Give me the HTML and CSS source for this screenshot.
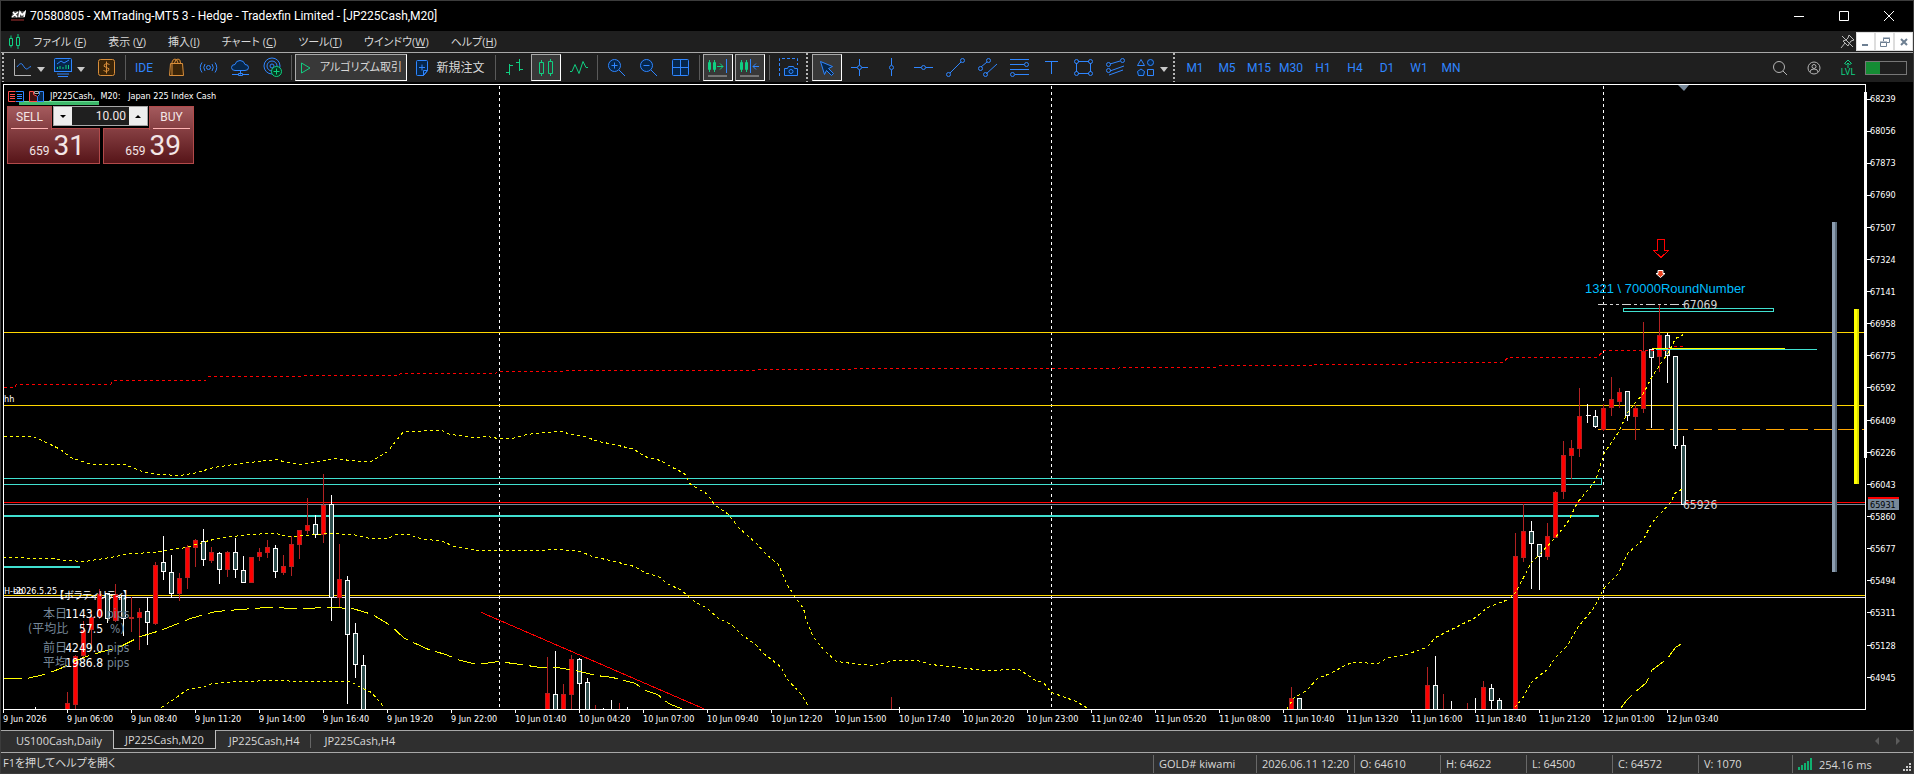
FILE: index.html
```html
<!DOCTYPE html>
<html lang="ja">
<head>
<meta charset="utf-8">
<title>70580805 - XMTrading-MT5 3 - Hedge - Tradexfin Limited - [JP225Cash,M20]</title>
<link rel="stylesheet" href="styles.css">
</head>
<body>
<header class="titlebar">
  <svg class="logo" width="16" height="12" viewBox="0 0 16 12"><path d="M3 1h12l-1 7H1z" fill="#444"/><path d="M3 2l4 5M8 2L2 7M9 7l1-5 2 3 3-3-1 5" stroke="#fff" stroke-width="1.6" fill="none"/><path d="M1 10h13" stroke="#a33"/></svg>
  <h1 class="title">70580805 - XMTrading-MT5 3 - Hedge - Tradexfin Limited - [JP225Cash,M20]</h1>
  <div class="window-buttons">
    <button aria-label="Minimize"><svg width="12" height="12" viewBox="0 0 12 12"><path d="M1 6.500h10"/></svg></button>
    <button aria-label="Maximize"><svg width="12" height="12" viewBox="0 0 12 12"><path d="M1.500 1.500h9v9h-9z"/></svg></button>
    <button aria-label="Close"><svg width="12" height="12" viewBox="0 0 12 12"><path d="M1 1l10 10M11 1L1 11"/></svg></button>
  </div>
</header>

<nav class="menubar">
  <svg class="menu-logo" width="13" height="15" viewBox="0 0 13 15"><path d="M1.500 4.500h3v7h-3zM3 1.500v3M3 11.500v2M8.500 3.500h3v8h-3zM10 0v3.500M10 11.500V15" fill="none" stroke="#10d082"/></svg>
  <a href="#">ファイル (<u>F</u>)</a><a href="#">表示 (<u>V</u>)</a><a href="#">挿入(<u>I</u>)</a><a href="#">チャート (<u>C</u>)</a><a href="#">ツール(<u>T</u>)</a><a href="#">ウインドウ(<u>W</u>)</a><a href="#">ヘルプ(<u>H</u>)</a>
  <div class="mdi">
    <svg width="15" height="15" viewBox="0 0 15 15"><path d="M2 2l11 11M9 1l5 5-3 1-2 3-1 2-5-5 3-1 2-2zM5 9l-4 5" fill="none" stroke="#bbb"/></svg>
    <button aria-label="Minimize chart"><svg width="12" height="12" viewBox="0 0 12 12"><path d="M2 9h6" stroke-width="2"/></svg></button>
    <button aria-label="Restore chart"><svg width="12" height="12" viewBox="0 0 12 12"><path d="M4.500 5V2.500h6v4H8M4 2h7M1.500 6.500h6v4h-6zM1 6h7"/></svg></button>
    <button aria-label="Close chart"><svg width="12" height="12" viewBox="0 0 12 12"><path d="M3 3l6 6M9 3L3 9" stroke-width="2"/></svg></button>
  </div>
</nav>

<div class="toolbar" role="toolbar" aria-label="Tools">
  <span class="grip"></span>
  <button class="tool drop" aria-label="Line chart"><svg class="icon" viewBox="0 0 20 21"><path class="gray" d="M1.500 2v16.500H18"/><path d="M4 10c2-3 4-4 5-3s3 5 4.500 5S16 10 18 9.500"/></svg><i class="caret"></i></button>
  <button class="tool drop" aria-label="Indicators"><svg class="icon" viewBox="0 0 20 21"><path class="soft" d="M2.500 1.500h15q1 0 1 1v12h-17v-12q0-1 1-1z"/><path d="M1 14.500h18M4 17h12M5 19.500h10M4 7l4-3 3 2 5-3"/><path class="green" d="M4.500 12v-2M7 12V9M10 12v-2M13 12V8M15.500 12V8"/></svg><i class="caret"></i></button>
  <button class="tool" aria-label="Market"><svg class="icon" viewBox="0 0 20 21"><rect class="amber" x="2.500" y="2.500" width="16" height="16" rx="2"/><path class="amber" d="M13.500 7.500q-3-2-5 0t2 3 2 3-5 0M10.500 4.500v12"/></svg></button>
  <i class="sep"></i>
  <button class="tool">IDE</button>
  <button class="tool" aria-label="Shop"><svg class="icon" viewBox="0 0 20 21"><path class="amber" d="M4.500 6.500h12l1 12h-14zM6 18V5q1-3 3-3t3 4M8.500 6q1-4 3.500-4t2.500 4"/></svg></button>
  <button class="tool" aria-label="Signals"><svg class="icon" viewBox="0 0 20 21"><circle cx="10.500" cy="10.500" r="2"/><path d="M7 7q-2.500 3.500 0 7M14 7q2.500 3.500 0 7M4 5.500q-3.500 5 0 10M17 5.500q3.500 5 0 10"/></svg></button>
  <button class="tool" aria-label="VPS"><svg class="icon" viewBox="0 0 20 21"><path class="soft" d="M5 13.500q-3.500 0-3.500-3t3.500-3q1-4 5-4t5 4q3.500 0 3.500 3t-3.500 3z"/><path d="M10.500 13.500v4M2 17.500h6M13 17.500h6M8.500 16.500h4v2h-4z"/></svg></button>
  <button class="tool" aria-label="Network"><svg class="icon" viewBox="0 0 20 21"><circle cx="10" cy="9" r="8"/><circle cx="10" cy="9" r="5"/><circle cx="10" cy="9" r="2"/><circle class="greenfill" cx="14.500" cy="14.500" r="5"/><path class="green" d="M11.500 14.500h6M14.500 11.500v6"/></svg></button>
  <i class="sep"></i>
  <button class="tool wide pressed"><svg class="play" width="12" height="14" viewBox="0 0 12 14"><path class="green" d="M1.500 2v10L10 7z"/></svg>アルゴリズム取引</button>
  <button class="tool order"><svg width="14" height="18" viewBox="0 0 14 18"><path class="soft" d="M2.500 1.500h9q1 0 1 1v9l-4 5h-6q-1 0-1-1v-13q0-1 1-1z"/><path d="M4 8.500h6M7 5.500v6M12.500 11.500l-4 5v-5z"/></svg>新規注文</button>
  <i class="sep"></i>
  <button class="tool" aria-label="Bar chart"><svg class="icon" viewBox="0 0 20 21"><path class="green" d="M5.500 7v11M2 15.500h3.500M5.500 8.500H9M15.500 2v12M12 5.500h3.500M15.500 12.500H19"/></svg></button>
  <button class="tool pressed" aria-label="Candlesticks"><svg class="icon" viewBox="0 0 20 21"><path class="green" d="M3.500 5.500h4v11h-4zM5.500 3v2.500M5.500 16.500V19M12.500 4.500h4v12h-4zM14.500 2v2.500M14.500 16.500V19"/></svg></button>
  <button class="tool" aria-label="Line"><svg class="icon" viewBox="0 0 20 21"><path class="green" d="M2 14.500h2l3-7 4 9 4-12 3 6h2"/></svg></button>
  <i class="sep"></i>
  <button class="tool" aria-label="Zoom in"><svg class="icon" viewBox="0 0 20 21"><circle class="soft" cx="8.500" cy="8.500" r="6"/><path d="M13 13l6 6M5.500 8.500h6M8.500 5.500v6"/></svg></button>
  <button class="tool" aria-label="Zoom out"><svg class="icon" viewBox="0 0 20 21"><circle class="soft" cx="8.500" cy="8.500" r="6"/><path d="M13 13l6 6M5.500 8.500h6"/></svg></button>
  <button class="tool" aria-label="Tile windows"><svg class="icon" viewBox="0 0 20 21"><rect class="soft" x="2.500" y="2.500" width="16" height="16" rx="1"/><path d="M10.500 2.500v16M2.500 10.500h16"/></svg></button>
  <i class="sep"></i>
  <button class="tool pressed" aria-label="Auto scroll"><svg class="icon" viewBox="0 0 20 21"><path class="green" d="M.5 5.500h2v7h-2zM1.500 3v12M5.500 5.500h2v7h-2zM6.500 3v12M9 9.500h6M12 6.500l3 3-3 3"/><path d="M18.500 2v14"/><path class="gray" d="M0 19h19"/></svg></button>
  <button class="tool pressed" aria-label="Chart shift"><svg class="icon" viewBox="0 0 20 21"><path class="green" d="M.5 5.500h2v7h-2zM1.500 3v12M5.500 5.500h2v7h-2zM6.500 3v12"/><path d="M10.500 2v14M19 9.500h-6M16 6.500l-3 3 3 3"/><path class="gray" d="M0 19h19"/></svg></button>
  <i class="sep"></i>
  <button class="tool" aria-label="Screenshot"><svg class="icon" viewBox="0 0 20 21"><path stroke-dasharray="3 2" d="M1.500 19V1.500h18V8"/><path class="soft" d="M6.500 11.500h3l1-2h5l1 2h3v7h-13z"/><circle cx="13" cy="14.500" r="2"/></svg></button>
  <span class="grip"></span>
  <button class="tool pressed" aria-label="Cursor"><svg class="icon" viewBox="0 0 20 21"><path class="soft" d="M3.500 4.500l12 5-4 2 5 5-2 2-5-5-2 4z"/></svg></button>
  <button class="tool" aria-label="Crosshair"><svg class="icon" viewBox="0 0 20 21"><path d="M2 10.500h6M13 10.500h6M10.500 2v6M10.500 13v6"/><circle cx="10.500" cy="10.500" r="2"/></svg></button>
  <button class="tool" aria-label="Vertical line"><svg class="icon" viewBox="0 0 20 21"><path d="M10.500 1v7M10.500 13v6"/><circle cx="10.500" cy="10.500" r="2"/></svg></button>
  <button class="tool" aria-label="Horizontal line"><svg class="icon" viewBox="0 0 20 21"><path d="M1 10.500h7M13 10.500h7"/><circle cx="10.500" cy="10.500" r="2"/></svg></button>
  <button class="tool" aria-label="Trendline"><svg class="icon" viewBox="0 0 20 21"><path d="M5 16L16 5"/><circle cx="3.500" cy="17.500" r="2"/><circle cx="17.500" cy="3.500" r="2"/></svg></button>
  <button class="tool" aria-label="Channel"><svg class="icon" viewBox="0 0 20 21"><path d="M4 10l6-5M9 17L20 7"/><circle cx="3.500" cy="11.500" r="2"/><circle cx="11.500" cy="3.500" r="2"/><circle cx="8.500" cy="17.500" r="2"/></svg></button>
  <button class="tool" aria-label="Fibonacci"><svg class="icon" viewBox="0 0 20 21"><path d="M1 2.500h19M1 7.500h14M1 12.500h19M6 17.500h14"/><circle cx="17.500" cy="7.500" r="2"/><circle cx="3.500" cy="17.500" r="2"/></svg></button>
  <button class="tool" aria-label="Text"><svg class="icon" viewBox="0 0 20 21"><path d="M4 4.500h13M10.500 4.500V17"/></svg></button>
  <button class="tool" aria-label="Rectangle"><svg class="icon" viewBox="0 0 20 21"><path d="M5 4.500h11M5 16.500h11M3.500 6v9M17.500 6v9"/><circle cx="3.500" cy="4.500" r="2"/><circle cx="17.500" cy="4.500" r="2"/><circle cx="3.500" cy="16.500" r="2"/><circle cx="17.500" cy="16.500" r="2"/></svg></button>
  <button class="tool" aria-label="Pitchfork"><svg class="icon" viewBox="0 0 20 21"><path d="M5 7l10-3M5 14l14-5M4 18l14-5"/><circle cx="3.500" cy="7.500" r="2"/><circle cx="17.500" cy="3.500" r="2"/><circle cx="3.500" cy="13.500" r="2"/></svg></button>
  <button class="tool drop shapes" aria-label="Shapes"><svg class="icon" viewBox="0 0 20 21"><path d="M5 2.500l3.500 6h-7zM11.500 12.500h6v6h-6z"/><circle class="soft" cx="14.500" cy="5.500" r="3"/><path class="soft" d="M5 12l3.500 2.500-1 4h-5l-1-4z"/></svg><i class="caret"></i></button>
  <span class="grip short"></span>
  <button class="tool">M1</button><button class="tool">M5</button><button class="tool">M15</button><button class="tool">M30</button><button class="tool">H1</button><button class="tool">H4</button><button class="tool">D1</button><button class="tool">W1</button><button class="tool">MN</button>
  <div class="status-tools">
    <button aria-label="Search"><svg width="16" height="16" viewBox="0 0 16 16"><circle class="gray" cx="7" cy="7" r="5.500"/><path class="gray" d="M11 11l4 4"/></svg></button>
    <button aria-label="Account"><svg width="16" height="16" viewBox="0 0 16 16"><circle class="gray" cx="8" cy="8" r="6"/><circle class="gray" cx="8" cy="6.500" r="2"/><path class="gray" d="M4 12q0-3 4-3t4 3"/></svg></button>
    <button class="lvl"><svg width="12" height="9" viewBox="0 0 12 9"><path class="green" d="M6 1L2.500 4.500 4.500 5.500 6 4 7.500 5.500l2-1zM6 4v5"/></svg>LVL</button>
    <span class="meter"><i></i></span>
  </div>
</div>

<main class="workspace">
  <svg class="chart" viewBox="0 82 1914 648" role="img" aria-label="JP225Cash M20">
    <g class="plot" transform="translate(.5 .5)">
      <path class="day" d="M499 85V709M1051 85V709M1603 85V709"/>
      <path class="gold" d="M3 332H1864M3 405H1864M3 595H1864"/>
      <path class="lavender" d="M3 597H1864"/>
      <path class="slate" d="M3 504H1864"/>
      <path class="turq" d="M3 478H1601V484H3M1623 308H1773V311H1623z"/>
      <path class="turq bold" d="M3 515H1598M3 566H79"/>
      <path class="redline" d="M3 502H1864M481 612L705 709"/>
      <path class="pivot" d="M1597 429H1864"/>
      <path class="level" d="M1597 304H1683"/>

      <path class="wick-up" d="M67 691V709M75 654V709M83 620V657M91 610V647M99 588V618M115 583V621M131 596V631M139 607V649M155 561V624M179 572V600M187 544V588M195 538V566M211 546V562M227 550V576M251 556V582M259 547V560M267 539V557M283 554V574M291 535V575M299 529V558M307 497V533M323 473V542M339 543V606M547 656V709M563 683V709M571 654V709M595 704V709M619 702V709M891 696V709M1291 686V709M1427 666V709M1443 693V709M1467 702V709M1483 680V709M1515 532V709M1523 503V561M1547 522V559M1555 490V537M1563 440V498M1571 439V478M1579 387V456M1603 403V430M1611 376V415M1619 387V407M1635 404V439M1643 321V412M1659 304V371"/>
      <path class="wick-down" d="M35 706V709M107 592V622M123 594V635M147 596V644M163 535V579M171 554V597M203 528V565M219 551V583M235 537V577M243 555V582M275 544V577M315 514V537M331 494V620M347 575V703M355 622V677M363 654V709M555 650V709M579 657V709M587 677V709M603 707V709M611 699V709M627 706V709M899 706V709M1435 655V709M1451 700V709M1475 697V709M1491 683V709M1499 697V709M1531 520V588M1539 543V589M1587 403V422M1585 415h5M1595 409V427M1627 390V420M1651 349V427M1667 332V382M1675 356V448M1683 435V504"/>
      <path class="body-up" d="M65 703h4v6h-4zM73 656h4v48h-4zM81 630h4v25h-4zM89 617h4v12h-4zM97 594h4v22h-4zM113 594h4v26h-4zM129 617h4v1h-4zM137 612h4v5h-4zM153 565h4v58h-4zM177 578h4v15h-4zM185 547h4v30h-4zM193 540h4v7h-4zM209 552h4v8h-4zM225 552h4v17h-4zM249 557h4v25h-4zM257 552h4v4h-4zM265 547h4v5h-4zM281 566h4v6h-4zM289 544h4v22h-4zM297 530h4v14h-4zM305 525h4v5h-4zM321 505h4v29h-4zM337 579h4v18h-4zM545 693h4v16h-4zM561 694h4v15h-4zM569 659h4v35h-4zM1289 698h4v11h-4zM1425 685h4v24h-4zM1481 687h4v22h-4zM1513 556h4v153h-4zM1521 531h4v26h-4zM1545 536h4v20h-4zM1553 492h4v45h-4zM1561 455h4v36h-4zM1569 448h4v7h-4zM1577 416h4v32h-4zM1601 408h4v21h-4zM1609 399h4v8h-4zM1617 392h4v9h-4zM1633 408h4v8h-4zM1641 351h4v57h-4zM1657 335h4v21h-4z"/>
      <path class="body-down" d="M105 593h4v25h-4zM121 595h4v23h-4zM145 611h4v11h-4zM161 562h4v9h-4zM169 572h4v21h-4zM201 541h4v18h-4zM217 553h4v16h-4zM233 552h4v17h-4zM241 570h4v12h-4zM273 548h4v23h-4zM313 524h4v10h-4zM329 504h4v93h-4zM345 580h4v54h-4zM353 633h4v31h-4zM361 665h4v44h-4zM553 694h4v15h-4zM577 659h4v24h-4zM585 682h4v27h-4zM1297 698h4v11h-4zM1433 685h4v24h-4zM1489 688h4v12h-4zM1497 700h4v9h-4zM1529 531h4v12h-4zM1537 544h4v12h-4zM1593 416h4v10h-4zM1625 391h4v24h-4zM1649 349h4v8h-4zM1665 335h4v20h-4zM1673 356h4v89h-4zM1681 445h4v59h-4z"/>

      <path class="turq" d="M1655 349H1816"/>
      <path class="yellow" d="M1651 348H1784"/>
      <path class="dots red" d="M3 387H14L16 384H110L113 380H205L208 376H300L302 375H396L401 373H495L497 371H565L566 370H756L758 369H850L855 368H1118L1119 367H1215L1218 365H1310L1312 364H1405L1410 362H1502L1508 357H1597L1603 350H1665L1672 346H1682"/>
      <path class="dots" d="M3 436H32L46 442 60 449 70 457 91 464H124L132 467 144 472 158 474 180 475 197 472 213 467 240 463 276 459 286 462 299 464 326 460 334 458 358 461H371L387 451 403 431 441 430 450 434 474 437 486 436 498 438H512L526 434 544 432 560 431 572 434 584 436 598 441 614 444 634 449 644 456 660 460 670 466 684 473 690 484 706 493 714 504 728 514 738 527 756 543 766 554 778 564 786 583 795 597 803 608 806 620 813 637 824 650 836 661 852 663 874 665 893 660H917L930 664 960 667 982 670 1019 669 1035 680 1043 682 1051 692 1076 701 1089 709M1286 709L1293 698 1306 690 1317 678 1330 673 1346 664 1354 662 1378 663 1388 657 1403 655 1426 647 1435 637 1453 628 1475 617 1487 607 1508 599 1515 592 1531 562 1539 554 1555 537 1567 522 1577 502 1587 490 1595 480 1604 452 1618 432 1627 412 1635 402 1643 393 1651 377 1659 365 1668 352 1675 338 1683 334"/>
      <path class="dots" d="M3 557L50 558 66 560 84 561 110 557 130 553 155 552 165 550 186 547 205 541 217 538 240 535 266 533H275L288 536 306 535 330 533 352 534 370 538H388L395 534H408L420 538 442 541 454 546 478 550H540L556 549 580 551 592 556 614 561 634 566 644 572 658 576 668 584 680 589 694 601 707 608 718 618 731 624 741 634 755 644 763 653 771 659 781 667 786 678 800 693 808 706M1514 707L1522 698 1531 682 1539 675 1547 669 1555 657 1567 645 1577 627 1593 608 1604 587 1618 573 1627 553 1643 539 1651 523 1659 514 1670 502 1675 492 1683 488"/>
      <path class="dots" d="M161 707L173 699 187 689 201 687 212 683 240 681 276 680 300 681H350L360 687 371 692 383 706"/>
      <path class="dashes" d="M3 678H26L44 674 60 668 75 660 92 654 120 646 140 636 160 630 190 618 215 611 240 609 266 607 300 608 330 607 352 608 372 614 390 625 404 638 428 649 445 654 460 660 477 664 498 661 520 664 540 667 556 667 575 670 596 675 612 677 635 683 645 690 657 694 668 703 683 709M1620 708L1626 700 1633 693 1646 682 1651 670 1667 658 1675 647 1683 642"/>

      <path class="frame" d="M3 709V84H1865V709H3M35 706V709M3 709v3M67 709v3M131 709v3M195 709v3M259 709v3M323 709v3M387 709v3M451 709v3M515 709v3M579 709v3M643 709v3M707 709v3M771 709v3M835 709v3M899 709v3M963 709v3M1027 709v3M1091 709v3M1155 709v3M1219 709v3M1283 709v3M1347 709v3M1411 709v3M1475 709v3M1539 709v3M1603 709v3M1667 709v3M1866 99h4M1866 131h4M1866 163h4M1866 195h4M1866 227h4M1866 259h4M1866 291h4M1866 323h4M1866 355h4M1866 387h4M1866 420h4M1866 452h4M1866 484h4M1866 516h4M1866 548h4M1866 580h4M1866 612h4M1866 645h4M1866 677h4"/>
      <path class="frame heavy" d="M1865 91V457"/>
    </g>
    <path fill="#778899" d="M1678 85h11l-5 6z"/>
    <path fill="#8c9db0" d="M1832 222h3v350h-3z"/><path fill="#5d6d7d" d="M1835 222h2v350h-2z"/>
    <path fill="#ff0" d="M1854 309h3v175h-3z"/><path fill="#dede00" d="M1857 309h2v175h-2z"/>
    <path class="sell-arrow" d="M1657.500 239.500h7v11h4l-7.500 7-7.500-7h4z"/>
    <path fill="#e8401c" stroke="#fff" d="M1658 270.500h5v3h2l-4.500 4-4.500-4h2z"/>
    <path fill="#f00" d="M1868 497h31v2h-31z"/><path fill="#778899" d="M1868 499h31v11h-31z"/>

    <g class="axis">
      <text x="1870" y="102">68239</text><text x="1870" y="134">68056</text><text x="1870" y="166">67873</text><text x="1870" y="198">67690</text><text x="1870" y="231">67507</text><text x="1870" y="263">67324</text><text x="1870" y="295">67141</text><text x="1870" y="327">66958</text><text x="1870" y="359">66775</text><text x="1870" y="391">66592</text><text x="1870" y="424">66409</text><text x="1870" y="456">66226</text><text x="1870" y="488">66043</text><text x="1870" y="520">65860</text><text x="1870" y="552">65677</text><text x="1870" y="584">65494</text><text x="1870" y="616">65311</text><text x="1870" y="649">65128</text><text x="1870" y="681">64945</text>
      <text class="last" x="1870" y="508">65931</text>
      <text x="3" y="722">9 Jun 2026</text><text x="67" y="722">9 Jun 06:00</text><text x="131" y="722">9 Jun 08:40</text><text x="195" y="722">9 Jun 11:20</text><text x="259" y="722">9 Jun 14:00</text><text x="323" y="722">9 Jun 16:40</text><text x="387" y="722">9 Jun 19:20</text><text x="451" y="722">9 Jun 22:00</text><text x="515" y="722">10 Jun 01:40</text><text x="579" y="722">10 Jun 04:20</text><text x="643" y="722">10 Jun 07:00</text><text x="707" y="722">10 Jun 09:40</text><text x="771" y="722">10 Jun 12:20</text><text x="835" y="722">10 Jun 15:00</text><text x="899" y="722">10 Jun 17:40</text><text x="963" y="722">10 Jun 20:20</text><text x="1027" y="722">10 Jun 23:00</text><text x="1091" y="722">11 Jun 02:40</text><text x="1155" y="722">11 Jun 05:20</text><text x="1219" y="722">11 Jun 08:00</text><text x="1283" y="722">11 Jun 10:40</text><text x="1347" y="722">11 Jun 13:20</text><text x="1411" y="722">11 Jun 16:00</text><text x="1475" y="722">11 Jun 18:40</text><text x="1539" y="722">11 Jun 21:20</text><text x="1603" y="722">12 Jun 01:00</text><text x="1667" y="722">12 Jun 03:40</text>
      <text x="4" y="402">hh</text><text x="4" y="594">H-bb</text><text x="13" y="594">-2026.5.25</text>
    </g>
    <text class="round" x="1585" y="293">1321 \ 70000RoundNumber</text>
    <g class="swing"><text x="1683" y="309">67069</text><text x="1683" y="509">65926</text></g>
    <g class="vola">
      <text class="head" x="59" y="599">【ボラティリティ】</text>
      <text x="43" y="618">本日</text><text class="num" x="103" y="618">1143.0</text><text x="107" y="618">pips</text>
      <text x="28" y="633">(平均比</text><text class="num" x="103" y="633">57.5</text><text x="110" y="633">%)</text>
      <text x="43" y="652">前日</text><text class="num" x="103" y="652">4249.0</text><text x="107" y="652">pips</text>
      <text x="43" y="667">平均</text><text class="num" x="103" y="667">1986.8</text><text x="107" y="667">pips</text>
    </g>
  </svg>

  <div class="overlay">
    <div class="symbol">
      <svg width="36" height="13" viewBox="0 0 36 13" fill="none"><path stroke="#ff4d4d" d="M7.500 1.500h-7v10h7M2 4.500h5M2 6.500h5M2 8.500h5"/><path stroke="#2f86ff" d="M8 1.500h7.500v10H8M9 4.500h5M9 6.500h5M9 8.500h5"/><path stroke="#ff4d4d" fill="#401010" d="M21.500 1.500h4v3l4 2v5h-8z"/><path stroke="#2f86ff" fill="#06264a" d="M35.500 1.500h-4v3l-2 2v5h6z"/><path stroke="#aaa" d="M26.500 1.500h4v2h-4z"/></svg>
      <span>JP225Cash,&nbsp; M20:&nbsp;&nbsp; Japan 225 Index Cash</span>
    </div>
    <div class="progress"></div>
    <div class="trade">
      <button class="side sell">SELL</button>
      <div class="volume"><button aria-label="Decrease volume"><i class="down"></i></button><input type="text" value="10.00" aria-label="Volume"><button aria-label="Increase volume"><i class="up"></i></button></div>
      <button class="side buy">BUY</button>
      <button class="price"><small>659</small>31</button>
      <button class="price right"><small>659</small>39</button>
    </div>
  </div>
</main>

<nav class="tabs">
  <a href="#">US100Cash,Daily</a><a href="#" class="active">JP225Cash,M20</a><a href="#">JP225Cash,H4</a><i></i><a href="#">JP225Cash,H4</a>
  <div class="scrollers"><button aria-label="Scroll left"><i class="left"></i></button><button aria-label="Scroll right"><i class="rightward"></i></button></div>
</nav>

<footer class="statusbar">
  <span class="help">F1を押してヘルプを開く</span>
  <span class="cell symbol-cell">GOLD# kiwami</span><span class="cell date-cell">2026.06.11 12:20</span><span class="cell">O: 64610</span><span class="cell">H: 64622</span><span class="cell">L: 64500</span><span class="cell">C: 64572</span><span class="cell volume-cell">V: 1070</span>
  <span class="cell ping"><svg width="15" height="12" viewBox="0 0 15 12"><path d="M1 12V9M4 12V7M7 12V5M10 12V3M13 12V0" stroke="#10b070" stroke-width="2"/></svg>254.16 ms
    <svg class="resize" width="9" height="9" viewBox="0 0 9 9"><path fill="#ccc" d="M6 0h2v2H6zM3 3h2v2H3zM6 3h2v2H6zM0 6h2v2H0zM3 6h2v2H3zM6 6h2v2H6z"/></svg></span>
</footer>
</body>
</html>
```
FILE: styles.css
```css
* { box-sizing: border-box; }

body {
  margin: 0;
  min-height: 100vh;
  display: flex;
  flex-direction: column;
  background: #2f2f2f;
  color: #d8d8d8;
  font: 12px/16px Roboto, "Noto Sans CJK JP", sans-serif;
  font-feature-settings: "palt";
}

body::after {
  content: "";
  position: fixed;
  inset: 0;
  border: 1px solid #3c3c3c;
  pointer-events: none;
}

button, input { font: inherit; color: inherit; font-feature-settings: inherit; }
button { border: 0; padding: 0; background: none; }
a { color: inherit; text-decoration: none; }

.menubar, .tabs, .statusbar { font-family: "Open Sans", "Noto Sans CJK JP", sans-serif; font-size: 11px; }

/* title */
.titlebar { display: flex; align-items: center; height: 31px; background: #000; color: #fff; }
.logo { margin-left: 10px; }
.title { flex: 1; margin: 0 0 0 4px; font-size: 12px; font-weight: 400; white-space: nowrap; }
.window-buttons { display: flex; padding-right: 3px; }
.window-buttons button { width: 45px; height: 30px; }
.window-buttons svg { fill: none; stroke: #fff; vertical-align: middle; }

/* menu */
.menubar { display: flex; align-items: center; gap: 22px; height: 22px; background: #1f1f1f; border-bottom: 1px solid #a8a8a8; }
.menu-logo { margin: 0 -10px 0 8px; }
.mdi { display: flex; align-items: center; margin-left: auto; padding-right: 1px; }
.mdi > svg { margin-right: 1px; }
.mdi button { width: 19px; height: 19px; background: #fff; border: 1px solid #ddd; }
.mdi button svg { display: block; margin: auto; fill: none; stroke: #6d7f92; }

/* toolbar */
.toolbar { display: flex; height: 29px; background: #1f1f1f; color: #2f86ff; }
.toolbar svg { fill: none; stroke: #2f86ff; }
.toolbar .gray { stroke: #b4b4b4; }
.toolbar .green { stroke: #10d082; }
.toolbar .greenfill { stroke: #10d082; fill: #06361f; }
.toolbar .amber { stroke: #d98e3a; fill: #3a2408; }
.toolbar .soft { fill: #06264a; }
.icon { width: 20px; height: 21px; flex: none; }
.grip { width: 7px; margin: 0; background: repeating-linear-gradient(#b4b4b4 0 2px, #1f1f1f 2px 4px) 2px 0 / 2px 100% no-repeat; }
.grip:first-child { width: 10px; }
.grip.short { width: 8px; }
.sep { width: 6px; background: linear-gradient(#5a5a5a, #5a5a5a) 3px 2px / 1px 25px no-repeat; }
.tool { width: 32px; height: 27px; margin: 1px 0; display: flex; align-items: center; justify-content: center; flex: none; white-space: nowrap; font-size: 12px; }
.tool.drop { width: 40px; justify-content: flex-start; gap: 4px; padding-left: 3px; }
.tool.shapes { padding-left: 5px; }
.caret { border: 4px solid transparent; border-top: 5px solid #c8c8c8; border-bottom: 0; margin-top: 4px; }
.pressed { width: 30px; margin: 1px; background: #383838; border: 1px solid #fff; border-top-color: #aaa; border-left-color: #aaa; }
.pressed .icon { margin: 0 -1px; }
.tool.wide { width: 112px; color: #d8d8d8; gap: 8px; font-size: 11px; }
.tool.order { width: 84px; color: #d8d8d8; gap: 7px; }
.status-tools { display: flex; align-items: center; gap: 16px; margin-left: auto; padding-right: 7px; }
.status-tools button { width: 18px; }
.status-tools svg { display: block; margin: auto; }
.status-tools .lvl { color: #10d082; font-size: 9px; line-height: 8px; }
.meter { width: 42px; height: 14px; margin-left: -8px; border: 1px solid #777; }
.meter i { display: block; width: 35%; height: 100%; background: #158c34; }

/* chart */
.workspace { position: relative; flex: 1; background: #000; }
.chart { display: block; width: 100%; height: auto; }
.plot { fill: none; stroke-width: 1; shape-rendering: crispEdges; }
.day { stroke: #fff; stroke-dasharray: 3 3; }
.gold { stroke: #ffd700; }
.lavender { stroke: #e6e6fa; }
.slate { stroke: #778899; }
.turq { stroke: #40e0d0; }
.turq.bold { stroke-width: 2; }
.redline { stroke: #f00; }
.pivot { stroke: #ffa500; stroke-dasharray: 18 6; }
.level { stroke: #d3d3d3; stroke-dasharray: 9 3 3 3 3 3; }
.yellow { stroke: #ff0; }
.dots { stroke: #ff0; stroke-dasharray: 3 3; }
.dots.red { stroke: #f00; }
.dashes { stroke: #ff0; stroke-dasharray: 18 6; }
.wick-up { stroke: #b22222; }
.wick-down { stroke: #fff; }
.body-up { fill: #f00; stroke: #b22222; }
.body-down { fill: #2f4f4f; stroke: #fff; }
.frame { stroke: #fff; }
.frame.heavy { stroke-width: 3; }
.sell-arrow { fill: none; stroke: #f00; shape-rendering: crispEdges; }
.axis { fill: #fff; font: 9px "DejaVu Sans Condensed", "DejaVu Sans", sans-serif; }
.axis .last { fill: #000; }
.round { fill: #00bfff; font: 13px "Liberation Sans", sans-serif; }
.swing { fill: #d3d3d3; font: 12px "DejaVu Sans Condensed", "DejaVu Sans", sans-serif; }
.vola { fill: #778899; font: 12px "DejaVu Sans Condensed", "Noto Sans CJK JP", sans-serif; }
.vola .num { fill: #fff; text-anchor: end; }
.vola .head { fill: #fff; font-size: 10px; font-feature-settings: "palt"; }

/* one-click trading */
.overlay { position: absolute; top: 8px; left: 7px; width: 220px; }
.symbol { display: flex; align-items: center; gap: 6px; height: 12px; color: #fff; font: 9px/12px "DejaVu Sans Condensed", "DejaVu Sans", sans-serif; white-space: nowrap; }
.symbol svg { margin-left: 1px; }
.progress { width: 80px; height: 4px; margin: -1px 0 0 12px; background: #3cb96a; border-top: 1px solid #6fdc97; }
.trade { display: grid; grid-template: 22px 36px / 45px 48px 3px 46px 45px; width: 187px; margin-top: 1px; color: #f4e6e6; }
.trade button { cursor: default; }
.side, .price { border: 1px solid #b24a4a; background: linear-gradient(#a45a5d, #541216) 0 0 / 100% 57px no-repeat; }
.side { border-bottom: 0; position: relative; z-index: 1; height: 24px; padding-bottom: 4px; }
.side::after { content: ""; position: absolute; left: 3px; right: 3px; bottom: 1px; height: 1px; background: #ffb4b4; }
.sell { grid-area: 1 / 1; }
.buy { grid-area: 1 / 5; }
.volume { grid-area: 1 / 2 / 2 / 5; display: flex; height: 20px; margin: 0 1px 0 1px; border: 1px solid #a8a8a8; background: #1f1f1f; }
.volume button { width: 18px; background: #eee; display: grid; place-items: center; }
.volume input { flex: 1; min-width: 0; border: 0; background: none; padding: 0 3px; text-align: right; font-size: 12px; }
.down { border: 3px solid transparent; border-top-color: #000; border-bottom: 0; }
.up { border: 3px solid transparent; border-bottom-color: #000; border-top: 0; }
.price { grid-area: 2 / 1 / 3 / 3; height: 36px; background-position: 0 -21px; font-size: 28px; line-height: 34px; text-align: right; padding-right: 14px; }
.price.right { grid-area: 2 / 4 / 3 / 6; padding-right: 12px; }
.price small { font-size: 12px; margin-right: 4px; }

/* chart tabs */
.tabs { display: flex; height: 22px; border-top: 1px solid #a8a8a8; background: #2f2f2f; padding-left: 3px; }
.tabs a { height: 19px; padding: 2px 11px 0 13px; }
.tabs .active { margin-top: -1px; background: #1f1f1f; border: 1px solid #c0c0c0; border-top: 0; padding: 2px 11px 0; }
.tabs > i { width: 1px; height: 14px; margin-top: 3px; background: #666; }
.scrollers { margin-left: auto; display: flex; padding-right: 6px; }
.scrollers button { width: 21px; height: 20px; display: grid; place-items: center; }
.left { border: 4px solid transparent; border-right-color: #5c5c5c; border-left: 0; }
.rightward { border: 4px solid transparent; border-left-color: #5c5c5c; border-right: 0; }

/* status */
.statusbar { display: flex; height: 22px; border-top: 1px solid #a8a8a8; background: #2f2f2f; line-height: 20px; white-space: nowrap; }
.help { flex: 1; padding-left: 3px; }
.cell { width: 86px; margin: 2px 0 1px; line-height: 17px; padding-left: 5px; border-left: 1px solid #686868; }
.symbol-cell { width: 103px; }
.date-cell { width: 98px; }
.volume-cell { width: 94px; }
.ping { width: 122px; display: flex; align-items: center; gap: 6px; }
.resize { margin: auto 2px 1px auto; }
```
